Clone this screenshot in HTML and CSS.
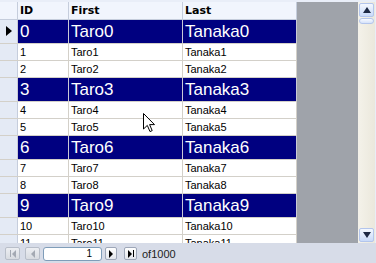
FILE: index.html
```html
<!DOCTYPE html>
<html lang="en">
<head>
	<meta charset="UTF-8">
	<title>Grid</title>
	<link rel="stylesheet" href="styles.css">
</head>
<body>
	<div class="grid">
		<div class="view">
			<div class="table">
				<div class="row head">
					<div class="cell rh"></div>
					<div class="cell c-id">ID</div>
					<div class="cell c-first">First</div>
					<div class="cell c-last">Last</div>
				</div>
				<div class="row big">
					<div class="cell rh"><span class="current"></span></div>
					<div class="cell c-id">0</div>
					<div class="cell c-first">Taro0</div>
					<div class="cell c-last">Tanaka0</div>
				</div>
				<div class="row">
					<div class="cell rh"></div>
					<div class="cell c-id">1</div>
					<div class="cell c-first">Taro1</div>
					<div class="cell c-last">Tanaka1</div>
				</div>
				<div class="row">
					<div class="cell rh"></div>
					<div class="cell c-id">2</div>
					<div class="cell c-first">Taro2</div>
					<div class="cell c-last">Tanaka2</div>
				</div>
				<div class="row big">
					<div class="cell rh"></div>
					<div class="cell c-id">3</div>
					<div class="cell c-first">Taro3</div>
					<div class="cell c-last">Tanaka3</div>
				</div>
				<div class="row">
					<div class="cell rh"></div>
					<div class="cell c-id">4</div>
					<div class="cell c-first">Taro4</div>
					<div class="cell c-last">Tanaka4</div>
				</div>
				<div class="row">
					<div class="cell rh"></div>
					<div class="cell c-id">5</div>
					<div class="cell c-first">Taro5</div>
					<div class="cell c-last">Tanaka5</div>
				</div>
				<div class="row big">
					<div class="cell rh"></div>
					<div class="cell c-id">6</div>
					<div class="cell c-first">Taro6</div>
					<div class="cell c-last">Tanaka6</div>
				</div>
				<div class="row">
					<div class="cell rh"></div>
					<div class="cell c-id">7</div>
					<div class="cell c-first">Taro7</div>
					<div class="cell c-last">Tanaka7</div>
				</div>
				<div class="row">
					<div class="cell rh"></div>
					<div class="cell c-id">8</div>
					<div class="cell c-first">Taro8</div>
					<div class="cell c-last">Tanaka8</div>
				</div>
				<div class="row big">
					<div class="cell rh"></div>
					<div class="cell c-id">9</div>
					<div class="cell c-first">Taro9</div>
					<div class="cell c-last">Tanaka9</div>
				</div>
				<div class="row">
					<div class="cell rh"></div>
					<div class="cell c-id">10</div>
					<div class="cell c-first">Taro10</div>
					<div class="cell c-last">Tanaka10</div>
				</div>
				<div class="row">
					<div class="cell rh"></div>
					<div class="cell c-id">11</div>
					<div class="cell c-first">Taro11</div>
					<div class="cell c-last">Tanaka11</div>
				</div>
			</div>
			<div class="filler"></div>
			<div class="vscroll">
				<div class="sbtn"><span class="arr up"></span></div>
				<div class="track">
					<div class="thumb"></div>
				</div>
				<div class="sbtn"><span class="arr down"></span></div>
			</div>
		</div>
		<div class="pager">
			<div class="pbtn off first"><span class="bar"></span><span class="tri left"></span></div>
			<div class="pbtn off prev"><span class="tri left"></span></div>
			<div class="pos">1</div>
			<div class="pbtn next"><span class="tri right"></span></div>
			<div class="pbtn last"><span class="tri right"></span><span class="bar"></span></div>
			<div class="count">of1000</div>
		</div>

		<svg class="cursor" width="13" height="20" viewBox="0 0 13 20">
			<path d="M0.5 0.5 L0.5 16 L4.3 12.4 L7 18.6 L9.2 17.6 L6.6 11.6 L11.5 11.6 Z" fill="#fff" stroke="#000" stroke-width="1"/>
		</svg>
	</div>
</body>
</html>
```

FILE: styles.css
```css
* {
	margin: 0;
	padding: 0;
	box-sizing: border-box;
}
body {
	width: 376px;
	height: 263px;
	overflow: hidden;
	font-family: "Liberation Sans", Arial, sans-serif;
	font-size: 11px;
	background-color: #d7dce8;
}
.grid {
	position: relative;
	width: 376px;
	height: 263px;
	display: flex;
	flex-direction: column;
}
.view {
	height: 243px;
	display: flex;
	padding-top: 2px;
	background-color: #e9eef8;
	overflow: hidden;
}
.table {
	width: 297px;
	display: flex;
	flex-direction: column;
	background-color: #fff;
}
.row {
	display: flex;
	height: 17px;
	flex-shrink: 0;
	border-bottom: 1px solid #d3d0c9;
	line-height: 16px;
}
.cell {
	border-right: 1px solid #d3d0c9;
	padding-left: 2px;
	white-space: nowrap;
	overflow: hidden;
}
.cell.rh {
	width: 18px;
	padding: 0;
	background-color: #e4eaf5;
	border-right-color: #c5cddc;
	position: relative;
}
.c-id {
	width: 51px;
}
.c-first,
.c-last {
	width: 114px;
}

.row.head {
	height: 18px;
	line-height: 17px;
	background-color: #f1f5fd;
	border-bottom-color: #c5cddc;
	font-family: "DejaVu Sans", Tahoma, sans-serif;
	font-weight: bold;
	font-size: 11px;
}
.row.head .cell {
	border-right-color: #c5cddc;
}
.row.head .rh {
	background-color: #f1f5fd;
}

.row.big {
	height: 24px;
	line-height: 23px;
	font-size: 17px;
	color: #fff;
	background-color: #000080;
	border-bottom-color: #d3d0c9;
}
.row.big .cell {
	border-right-color: #c9c9d6;
}

.current {
	position: absolute;
	left: 6px;
	top: 6px;
	width: 0;
	height: 0;
	border-top: 5px solid transparent;
	border-bottom: 5px solid transparent;
	border-left: 6px solid #000;
}

.filler {
	flex: 1;
	background-color: #9fa3aa;
}

.vscroll {
	width: 17px;
	margin-right: 1px;
	display: flex;
	flex-direction: column;
	padding: 1px 0;
	background: linear-gradient(to right, #f4f2ea, #ebe8dc);
}
.sbtn {
	height: 14px;
	margin: 0 1px;
	border: 1px solid #b3c5ec;
	border-radius: 2px;
	background: linear-gradient(to bottom, #f4f8ff, #c9daf9);
	display: flex;
	align-items: center;
	justify-content: center;
}
.arr {
	width: 0;
	height: 0;
	border-left: 4px solid transparent;
	border-right: 4px solid transparent;
}
.arr.up {
	border-bottom: 6px solid #1c2844;
}
.arr.down {
	border-top: 6px solid #1c2844;
}
.track {
	flex: 1;
	padding-top: 1px;
}
.thumb {
	height: 6px;
	margin: 0 1px;
	border: 1px solid #b3c5ec;
	border-radius: 3px;
	background: linear-gradient(to bottom, #f7faff, #d5e2fa);
}

.pager {
	flex: 1;
	display: flex;
	align-items: center;
	padding-left: 5px;
	padding-top: 1px;
	background-color: #d7dce8;
}
.pbtn {
	height: 13px;
	border: 1px solid #9ea7b8;
	border-radius: 2px;
	background: linear-gradient(to bottom, #ffffff, #e3e6ec);
	display: flex;
	align-items: center;
	justify-content: center;
	gap: 1px;
}
.pbtn.off {
	border-color: #b8bec9;
	background: linear-gradient(to bottom, #eceef2, #d8dbe1);
}
.first,
.prev {
	width: 15px;
}
.prev {
	margin-left: 5px;
}
.next {
	width: 12px;
	margin-left: 3px;
}
.last {
	width: 13px;
	margin-left: 7px;
}
.tri {
	width: 0;
	height: 0;
	border-top: 4px solid transparent;
	border-bottom: 4px solid transparent;
}
.tri.left {
	border-right: 4px solid #000;
}
.tri.right {
	border-left: 4px solid #000;
}
.bar {
	width: 1px;
	height: 7px;
	background-color: #000;
}
.off .tri.left {
	border-right-color: #a4a9b3;
}
.off .bar {
	background-color: #a4a9b3;
}
.pos {
	width: 59px;
	height: 14px;
	margin-left: 3px;
	border: 1px solid #7f9db9;
	border-radius: 3px;
	background-color: #fff;
	display: flex;
	align-items: center;
	justify-content: flex-end;
	padding-right: 9px;
	font-size: 10px;
	line-height: 12px;
}
.count {
	margin-left: 5px;
	color: #222;
}

.cursor {
	position: absolute;
	left: 143px;
	top: 113px;
}
```
